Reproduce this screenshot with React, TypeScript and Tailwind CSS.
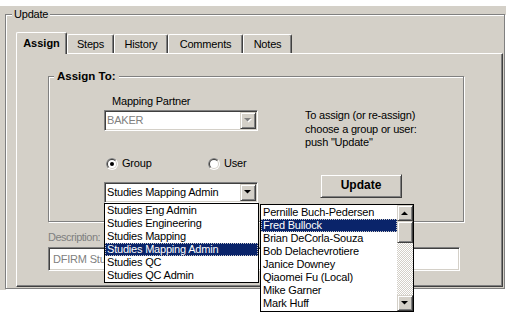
import React from "react";

const raised =
  "bg-[#d4d0c8] border border-t-[#d4d0c8] border-l-[#d4d0c8] border-b-[#404040] border-r-[#404040] shadow-[inset_1px_1px_0_#fff,inset_-1px_-1px_0_#808080]";
const sunken =
  "border border-t-[#808080] border-l-[#808080] border-b-white border-r-white shadow-[inset_1px_1px_0_#404040,inset_-1px_-1px_0_#d4d0c8]";
const etched = "border border-[#808080] shadow-[1px_1px_0_#fff,inset_1px_1px_0_#fff]";

function Tri({ up, disabled }: { up?: boolean; disabled?: boolean }) {
  const pts = up ? "0,4 7,4 3.5,0.5" : "0,0 7,0 3.5,3.5";
  return (
    <svg width="8" height="5" viewBox="0 0 8 5" className="shrink-0">
      {disabled && <polygon points={up ? "1,5 8,5 4.5,1.5" : "1,1 8,1 4.5,4.5"} fill="#fff" />}
      <polygon points={pts} fill={disabled ? "#808080" : "#000"} />
    </svg>
  );
}

function Radio({ checked }: { checked?: boolean }) {
  return (
    <svg width="12" height="12" viewBox="0 0 12 12" className="shrink-0">
      <circle cx="6" cy="6" r="6" fill="#fff" />
      <path d="M1.757 10.243A6 6 0 0 1 10.243 1.757Z" fill="#808080" />
      <circle cx="6" cy="6" r="5" fill="#d4d0c8" />
      <path d="M2.464 9.536A5 5 0 0 1 9.536 2.464Z" fill="#404040" />
      <circle cx="6" cy="6" r="4" fill="#fff" />
      {checked && <circle cx="6" cy="6" r="2" fill="#000" />}
    </svg>
  );
}

function Combo({ text, disabled }: { text: string; disabled?: boolean }) {
  return (
    <div className={`flex h-[21px] w-[154px] bg-white p-[1px] ${sunken}`}>
      <div className={`flex-1 flex items-center pl-[1px] ${disabled ? "text-[#808080]" : "text-black"}`}>{text}</div>
      <div className={`w-[16px] h-full flex items-center justify-center ${raised}`}>
        <Tri disabled={disabled} />
      </div>
    </div>
  );
}

const groups = ["Studies Eng Admin", "Studies Engineering", "Studies Mapping", "Studies Mapping Admin", "Studies QC", "Studies QC Admin"];
const users = [
  "Pernille Buch-Pedersen",
  "Fred Bullock",
  "Brian DeCorla-Souza",
  "Bob Delachevrotiere",
  "Janice Downey",
  "Qiaomei Fu (Local)",
  "Mike Garner",
  "Mark Huff",
];

const tabs = [
  { label: "Assign", cls: "w-[51px]", active: true },
  { label: "Steps", cls: "w-[47px]" },
  { label: "History", cls: "w-[54px]" },
  { label: "Comments", cls: "w-[75px]" },
  { label: "Notes", cls: "w-[49px]" },
];

export default function App() {
  return (
    <div className="relative w-[510px] h-[312px] overflow-hidden bg-white font-['Liberation_Sans',Arial,sans-serif] text-[11px] leading-[13px] tracking-[-0.2px] text-black">
      <div className="mt-[6px] w-[506px] h-[284px] bg-[#d4d0c8] pl-[5px] pt-[8px]">
        {/* Update group box */}
        <div className={`relative w-[500px] h-[275px] pl-[10px] pt-[17px] ${etched}`}>
          <span className="absolute left-[6px] top-[-7px] bg-[#d4d0c8] px-[2px]">Update</span>

          {/* Tabs */}
          <div className="relative z-10 flex items-end h-[21px]">
            {tabs.map((t) =>
              t.active ? (
                <div
                  key={t.label}
                  className={`${t.cls} h-[22px] mb-[-1px] flex items-center justify-center font-bold tracking-normal bg-[#d4d0c8] border-l border-t border-r border-l-white border-t-white border-r-[#404040] shadow-[inset_-1px_0_0_#808080] rounded-tl-[2px] rounded-tr-[2px]`}
                >
                  {t.label}
                </div>
              ) : (
                <div
                  key={t.label}
                  className={`${t.cls} h-[19px] flex items-center justify-center bg-[#d4d0c8] border-l border-t border-r border-l-white border-t-white border-r-[#404040] shadow-[inset_-1px_0_0_#808080] rounded-tl-[2px] rounded-tr-[2px]`}
                >
                  {t.label}
                </div>
              )
            )}
          </div>

          {/* Tab panel */}
          <div className="w-[487px] h-[234px] pl-[31px] pt-[22px] border border-t-white border-l-white border-r-[#404040] border-b-[#404040] shadow-[inset_-1px_-1px_0_#808080]">
            {/* Assign To group box */}
            <div className={`relative w-[416px] h-[146px] flex ${etched}`}>
              <span className="absolute left-[5px] top-[-7px] bg-[#d4d0c8] px-[3px] font-bold text-[11.5px] tracking-normal">Assign To:</span>

              {/* Left column */}
              <div className="ml-[55px] w-[154px] flex flex-col">
                <div className="mt-[18px] pl-[8px]">Mapping Partner</div>
                <div className="mt-[2px]">
                  <Combo text="BAKER" disabled />
                </div>
                <div className="mt-[26px] h-[13px] flex items-center pl-[2px]">
                  <div className="w-[102px] flex items-center gap-[4px]">
                    <Radio checked />
                    <span>Group</span>
                  </div>
                  <div className="flex items-center gap-[4px]">
                    <Radio />
                    <span>User</span>
                  </div>
                </div>
                <div className="relative mt-[12px]">
                  <Combo text="Studies Mapping Admin" />

                  {/* Group dropdown list */}
                  <div className="absolute z-20 left-0 top-[21px] w-[155px] h-[80px] bg-white border border-black">
                    {groups.map((g) =>
                      g === "Studies Mapping Admin" ? (
                        <div key={g} className="h-[13px] pl-[2px] flex items-center bg-[#0a246a] text-white outline outline-1 outline-dotted outline-[#c8c8c8] -outline-offset-1">
                          {g}
                        </div>
                      ) : (
                        <div key={g} className="h-[13px] pl-[2px] flex items-center">
                          {g}
                        </div>
                      )
                    )}
                  </div>

                  {/* User dropdown list */}
                  <div className="absolute z-20 left-[156px] top-[22px] w-[154px] h-[108px] bg-white border border-black flex">
                    <div className="flex-1 pt-[1px]">
                      {users.map((u) =>
                        u === "Fred Bullock" ? (
                          <div key={u} className="h-[13px] pl-[2px] flex items-center bg-[#0a246a] text-white outline outline-1 outline-dotted outline-[#c8c8c8] -outline-offset-1">
                            {u}
                          </div>
                        ) : (
                          <div key={u} className="h-[13px] pl-[2px] flex items-center">
                            {u}
                          </div>
                        )
                      )}
                    </div>
                    <div className="w-[16px] flex flex-col">
                      <div className={`h-[16px] flex items-center justify-center ${raised}`}>
                        <Tri up />
                      </div>
                      <div className={`h-[22px] ${raised}`} />
                      <div className="flex-1 bg-[repeating-conic-gradient(#d4d0c8_0_25%,#ffffff_0_50%)] bg-[length:2px_2px]" />
                      <div className={`h-[16px] flex items-center justify-center ${raised}`}>
                        <Tri />
                      </div>
                    </div>
                  </div>
                </div>
              </div>

              {/* Right column */}
              <div className="ml-[47px] flex flex-col">
                <div className="mt-[32px] leading-[13.5px]">
                  <div>To assign (or re-assign)</div>
                  <div>choose a group or user:</div>
                  <div>push "Update"</div>
                </div>
                <button
                  className={`mt-[24px] ml-[15px] w-[82px] h-[24px] flex items-center justify-center font-bold text-[12px] tracking-normal ${raised}`}
                >
                  Update
                </button>
              </div>
            </div>

            <div className="mt-[9px] text-[#808080] tracking-[-0.5px]">Description:</div>
            <div className={`mt-[3px] w-[412px] h-[24px] bg-white flex items-center pl-[4px] text-[#808080] ${sunken}`}>
              DFIRM Stu
            </div>
          </div>
        </div>
      </div>
    </div>
  );
}
